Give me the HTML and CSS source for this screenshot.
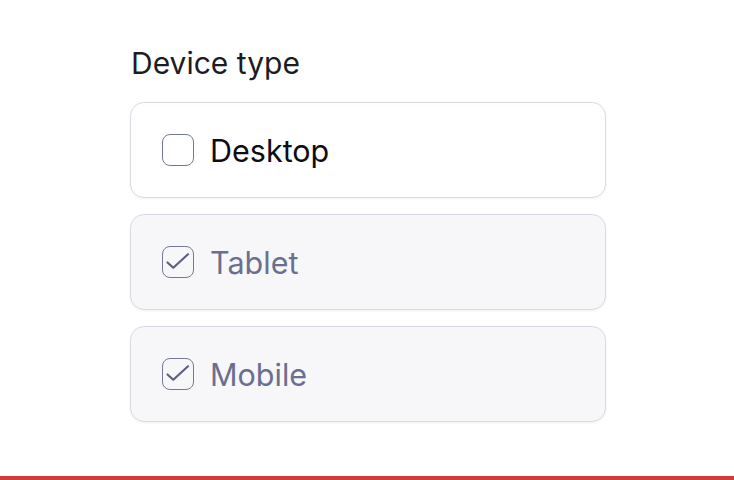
FILE: index.html
```html
<!DOCTYPE html>
<html lang="en">
<head>
<meta charset="utf-8">
<title>Device type</title>
<link rel="stylesheet" href="styles.css">
</head>
<body>
<main class="page">
  <div class="group" role="group" aria-labelledby="device-type-label">
    <div class="group-label" id="device-type-label">Device type</div>
    <div class="options">
      <label class="option">
        <span class="box"></span>
        <span class="option-text">Desktop</span>
      </label>
      <label class="option option-disabled">
        <span class="box">
          <svg viewBox="0 0 32 32" width="32" height="32" aria-hidden="true"><path d="M5.5 16.5 L11.3 21.7 L26 8.3" fill="none" stroke="currentColor" stroke-width="2.2" stroke-linecap="round" stroke-linejoin="round"/></svg>
        </span>
        <span class="option-text">Tablet</span>
      </label>
      <label class="option option-disabled">
        <span class="box">
          <svg viewBox="0 0 32 32" width="32" height="32" aria-hidden="true"><path d="M5.5 16.5 L11.3 21.7 L26 8.3" fill="none" stroke="currentColor" stroke-width="2.2" stroke-linecap="round" stroke-linejoin="round"/></svg>
        </span>
        <span class="option-text">Mobile</span>
      </label>
    </div>
  </div>
</main>
<div class="bottom-bar"></div>
</body>
</html>
```
FILE: styles.css
```css
* { box-sizing: border-box; }
html, body {
  margin: 0;
  padding: 0;
  background: #ffffff;
  height: 100%;
}
body {
  font-family: "Inter", "Noto Sans", sans-serif;
  display: flex;
  flex-direction: column;
}
.page {
  flex: 1;
  padding: 45px 0 0 130px;
}
.group {
  width: 476px;
}
.group-label {
  margin: 0 0 21px 1px;
  font-size: 30px;
  line-height: 36px;
  color: #1c1c22;
}
.options {
  display: flex;
  flex-direction: column;
  gap: 16px;
}
.option {
  display: flex;
  align-items: center;
  gap: 16px;
  height: 96px;
  padding: 0 0 0 31px;
  border: 1px solid #d9d9e4;
  border-radius: 14px;
  background: #ffffff;
  box-shadow: 0 1px 3px rgba(20, 20, 60, 0.05);
}
.box {
  width: 32px;
  height: 32px;
  flex: none;
  border: 1px solid #74789a;
  border-radius: 8px;
  color: #5c6083;
  display: flex;
}
.box svg { display: block; margin: -1px; }
.option-text {
  font-size: 30.5px;
  color: #0d0d12;
}
.option-disabled {
  background: #f7f7fa;
}
.option-disabled .option-text {
  color: #6b6f8f;
}
.bottom-bar {
  height: 4px;
  background: #d13c3c;
  flex: none;
}
```
